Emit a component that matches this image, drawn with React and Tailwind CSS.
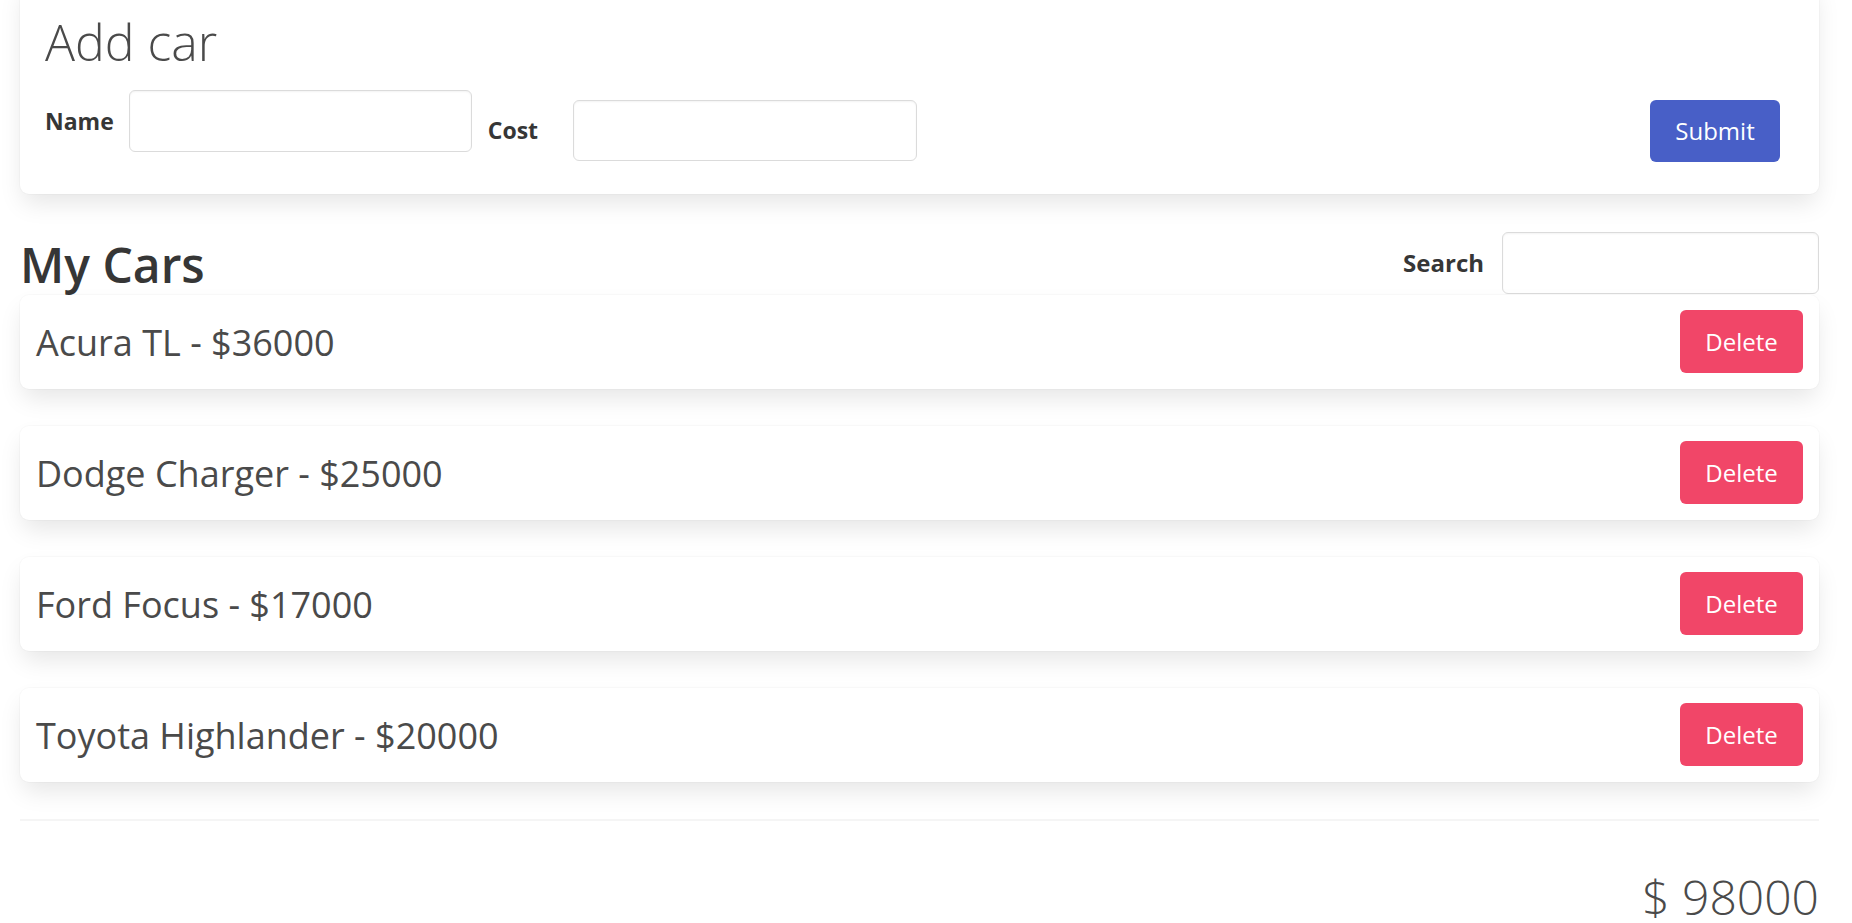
import React, { useState } from "react";

const cars = [
  { id: 1, name: "Acura TL", cost: 36000 },
  { id: 2, name: "Dodge Charger", cost: 25000 },
  { id: 3, name: "Ford Focus", cost: 17000 },
  { id: 4, name: "Toyota Highlander", cost: 20000 },
];

const boxShadow =
  "shadow-[0_12px_25px_-3px_rgba(10,10,10,0.1),0_0_0_1px_rgba(10,10,10,0.02)]";

const App = () => {
  const [list, setList] = useState(cars);
  const [search, setSearch] = useState("");

  const total = list.reduce((sum, car) => sum + car.cost, 0);
  const shown = list.filter((car) =>
    car.name.toLowerCase().includes(search.toLowerCase())
  );

  return (
    <div
      className="min-h-screen bg-white pl-[20px] pr-[33px]"
      style={{ fontFamily: '"Open Sans", "Noto Sans", sans-serif' }}
    >
      {/* Add car form */}
      <div
        className={`-mt-[20px] rounded-[9px] bg-white pl-[25px] pr-[39px] pt-[37px] pb-[32px] ${boxShadow}`}
      >
        <h1 className="text-[50px] font-light leading-none text-[#4a4a4a]">
          Add car
        </h1>
        <div className="mt-[23px] flex items-start">
          <div className="flex items-center gap-[15px]">
            <label className="text-[23px] font-bold text-[#363636]">Name</label>
            <input
              type="text"
              className="h-[62px] w-[343px] rounded-[6px] border border-[#dbdbdb] px-4 shadow-[inset_0_1px_2px_rgba(10,10,10,0.05)] outline-none"
            />
          </div>
          <div className="ml-[16px] mt-[10px] flex items-center gap-[35px]">
            <label className="text-[23px] font-bold text-[#363636]">Cost</label>
            <input
              type="text"
              className="h-[61px] w-[344px] rounded-[6px] border border-[#dbdbdb] px-4 shadow-[inset_0_1px_2px_rgba(10,10,10,0.05)] outline-none"
            />
          </div>
          <button className="ml-auto mt-[10px] h-[62px] w-[130px] rounded-[6px] bg-[#485fc7] text-[24px] text-white">
            Submit
          </button>
        </div>
      </div>

      {/* My cars header */}
      <div className="mt-[38px] flex items-start justify-between">
        <h2 className="mt-[9px] text-[48px] font-semibold leading-none text-[#363636]">
          My Cars
        </h2>
        <div className="flex items-center gap-[18px]">
          <label className="text-[24px] font-bold text-[#363636]">Search</label>
          <input
            type="text"
            value={search}
            onChange={(e) => setSearch(e.target.value)}
            className="h-[62px] w-[317px] rounded-[6px] border border-[#dbdbdb] px-4 shadow-[inset_0_1px_2px_rgba(10,10,10,0.05)] outline-none"
          />
        </div>
      </div>

      {/* Car list */}
      <div className="mt-[1px] flex flex-col gap-[37px]">
        {shown.map((car) => (
          <div
            key={car.id}
            className={`flex items-center justify-between rounded-[9px] bg-white pl-[16px] pr-[16px] pt-[15px] pb-[16px] ${boxShadow}`}
          >
            <span className="pt-[3px] text-[36px] leading-none text-[#4a4a4a]">
              {car.name} - ${car.cost}
            </span>
            <button
              onClick={() => setList(list.filter((c) => c.id !== car.id))}
              className="h-[63px] w-[123px] rounded-[6px] bg-[#f14668] text-[24px] text-white"
            >
              Delete
            </button>
          </div>
        ))}
      </div>

      <hr className="mt-[37px] h-[2px] border-0 bg-[#f5f5f5]" />

      <div className="mt-[52px] text-right text-[48px] font-light leading-none text-[#4a4a4a]">
        $ {total}
      </div>
    </div>
  );
};

export default App;
